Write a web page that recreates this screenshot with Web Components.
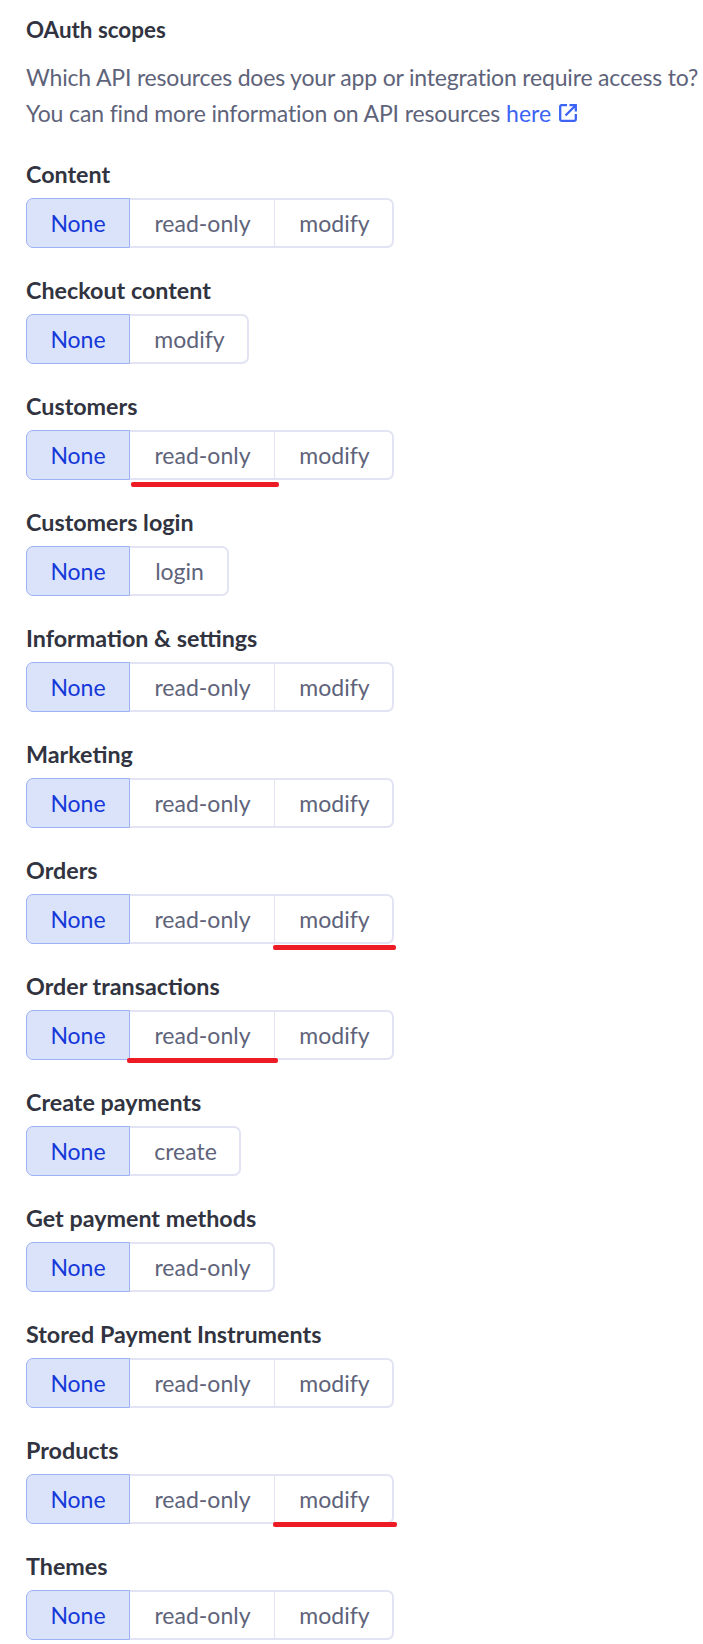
<!DOCTYPE html>
<html>
<head>
<meta charset="utf-8">
<title>OAuth scopes</title>
<style>
   html, body { margin: 0; background: #fff; }
   body { font-family: "Lato", "Liberation Sans", sans-serif; }
</style>
</head>
<body>
<scope-page>
   <scope-intro title="OAuth scopes">
      <span style="letter-spacing: -.18px">Which API resources does your app or integration require access to?</span><br>
      <span style="letter-spacing: -.13px">You can find more information on API resources</span>
      <ext-link>here</ext-link>
   </scope-intro>
   <scope-row label="Content" options="read-only,modify"></scope-row>
   <scope-row label="Checkout content" options="modify"></scope-row>
   <scope-row label="Customers" options="read-only,modify" mark="131:148:2"></scope-row>
   <scope-row label="Customers login" options="login"></scope-row>
   <scope-row label="Information &amp; settings" options="read-only,modify"></scope-row>
   <scope-row label="Marketing" options="read-only,modify"></scope-row>
   <scope-row label="Orders" options="read-only,modify" mark="273:123:1"></scope-row>
   <scope-row label="Order transactions" options="read-only,modify" mark="127:151:-2"></scope-row>
   <scope-row label="Create payments" options="create"></scope-row>
   <scope-row label="Get payment methods" options="read-only"></scope-row>
   <scope-row label="Stored Payment Instruments" options="read-only,modify"></scope-row>
   <scope-row label="Products" options="read-only,modify" mark="273:124:-2"></scope-row>
   <scope-row label="Themes" options="read-only,modify"></scope-row>
</scope-page>

<script>
"use strict";
/* [ page ]
=================================== */
class ScopePage extends HTMLElement {
   constructor() {
      super();
      this.attachShadow( { mode: "open" } ).innerHTML = `
         <style>
            :host {
               display: flex;
               flex-direction: column;
               gap: 30px;
               padding: 15px 0 0 26px;
               color: #313440;
            }
         </style>
         <slot></slot>
      `;
   }
}

/* [ heading + help text ]
=================================== */
class ScopeIntro extends HTMLElement {
   constructor() {
      super();
      this.attachShadow( { mode: "open" } ).innerHTML = `
         <style>
            :host { display: block; margin-bottom: 1px; }
            h2 {
               margin: 0 0 14px;
               font-size: 22.400px;
               line-height: 30px;
               font-weight: 700;
               color: #313440;
            }
            p {
               margin: 0;
               font-size: 23px;
               line-height: 36px;
               color: #5e637a;
               white-space: nowrap;
            }
         </style>
         <h2></h2>
         <p><slot></slot></p>
      `;
      this.shadowRoot.querySelector( "h2" ).textContent = this.getAttribute( "title" );
   }
}

class ExtLink extends HTMLElement {
   constructor() {
      super();
      this.attachShadow( { mode: "open" } ).innerHTML = `
         <style>
            :host {
               display: inline-flex;
               align-items: center;
               gap: 8px;
               color: #3c64f4;
            }
            svg { width: 18px; height: 18px; display: block; }
         </style>
         <slot></slot>
         <svg viewBox="0 0 18 18" fill="none" stroke="currentColor" stroke-width="2.3">
            <path d="M8 1.2H2.500A1.300 1.300 0 0 0 1.200 2.500V15.500A1.300 1.300 0 0 0 2.500 16.800H15.500A1.300 1.300 0 0 0 16.800 15.500V10"/>
            <path d="M6.500 11.500 16.500 1.500M10.500 1.200H16.800V7.500"/>
         </svg>
      `;
   }
}

/* [ one scope: label + segmented buttons ]
=================================== */
const optionWidth = { "None": 104, "read-only": 145, "modify": 119, "login": 99, "create": 111 };

class ScopeRow extends HTMLElement {
   constructor() {
      super();
      let 
         opts = [ "None" ].concat( this.getAttribute( "options" ).split( "," ) ),
         mark = this.getAttribute( "mark" )
      ;
      this.attachShadow( { mode: "open" } ).innerHTML = `
         <style>
            :host { display: block; position: relative; }
            label {
               display: block;
               height: 24px;
               margin-bottom: 12px;
               font-size: 23.300px;
               line-height: 24px;
               font-weight: 700;
               color: #313440;
            }
            group {
               display: flex;
               height: 50px;
            }
            seg-btn {
               display: flex;
               align-items: center;
               justify-content: center;
               box-sizing: border-box;
               height: 50px;
               padding: 0 0 1px 1px;
               background: #fff;
               border: solid #e2e4f3;
               border-width: 2px 1px 2px 0;
               font-size: 23px;
               color: #5e637a;
            }
            seg-btn:first-child {
               padding-left: 0;
               background: #dbe3fb;
               border: 1.500px solid #9db2f5;
               border-right-width: 1px;
               color: #1438d8;
               border-radius: 7px 0 0 7px;
            }
            seg-btn:last-child {
               padding-left: 2px;
               border-right-width: 2px;
               border-radius: 0 7px 7px 0;
            }
            mark-line {
               position: absolute;
               height: 5px;
               border-radius: 2px;
               background: #ed1c24;
            }
         </style>
         <label></label>
         <group></group>
      `;
      this.shadowRoot.querySelector( "label" ).textContent = this.getAttribute( "label" );
      let group = this.shadowRoot.querySelector( "group" );
      opts.forEach( name => {
         let btn = document.createElement( "seg-btn" );
         btn.textContent = name;
         btn.style.width = optionWidth[ name ] + "px";
         group.append( btn );
      } );
      if( mark ) {
         let 
            parts = mark.split( ":" ),
            line = document.createElement( "mark-line" )
         ;
         line.style.left = ( parts[ 0 ] - 26 ) + "px";
         line.style.width = parts[ 1 ] + "px";
         line.style.bottom = ( -5 - parts[ 2 ] ) + "px";
         this.shadowRoot.append( line );
      }
   }
}

window.customElements.define( "scope-page", ScopePage );
window.customElements.define( "scope-intro", ScopeIntro );
window.customElements.define( "ext-link", ExtLink );
window.customElements.define( "scope-row", ScopeRow );
</script>
</body>
</html>
